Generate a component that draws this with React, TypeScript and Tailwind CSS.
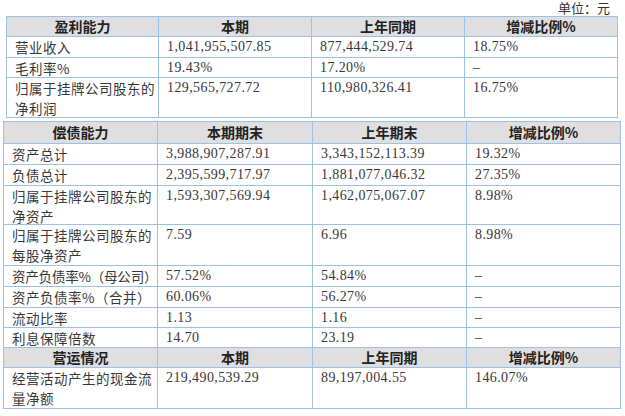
const serif = "font-['Liberation_Serif','Noto_Sans_CJK_SC',serif]";
const cjk = "font-['Noto_Sans_CJK_SC',sans-serif]";

type Row = { label: string[]; cur: string; prev: string; pct: string; h: string; tight?: boolean };

function HeaderRow({ cells, h }: { cells: string[]; h: string }) {
  return (
    <>
      {cells.map((c) => (
        <div
          key={c}
          className={`${h} ${cjk} flex items-center justify-center whitespace-nowrap border-r border-b border-[#9cc2e8] bg-[#dfdfdf] text-[14px] font-bold text-[#222]`}
        >
          {c}
        </div>
      ))}
    </>
  );
}

function DataRow({ row }: { row: Row }) {
  const multi = row.label.length > 1;
  const cell = `${row.h} whitespace-nowrap border-r border-b border-[#9cc2e8] pl-2 text-[#383838] ${multi ? '' : 'flex items-center'}`;
  return (
    <>
      <div
        className={`${cell} ${cjk} text-[13.5px] leading-[20px] ${row.tight ? 'tracking-[-0.2px]' : 'tracking-[0.5px]'}`}
      >
        <div>
          {row.label.map((l) => (
            <div key={l}>{l}</div>
          ))}
        </div>
      </div>
      <div className={`${cell} ${serif} text-[14px] leading-[20px] tracking-[0.4px]`}>{row.cur}</div>
      <div className={`${cell} ${serif} text-[14px] leading-[20px] tracking-[0.4px]`}>{row.prev}</div>
      <div className={`${cell} ${serif} text-[14px] leading-[20px] tracking-[0.4px]`}>{row.pct}</div>
    </>
  );
}

const profit: Row[] = [
  { label: ['营业收入'], cur: '1,041,955,507.85', prev: '877,444,529.74', pct: '18.75%', h: 'h-[21px]' },
  { label: ['毛利率%'], cur: '19.43%', prev: '17.20%', pct: '–', h: 'h-[20px]' },
  { label: ['归属于挂牌公司股东的', '净利润'], cur: '129,565,727.72', prev: '110,980,326.41', pct: '16.75%', h: 'h-[40px]' },
];

const debt: Row[] = [
  { label: ['资产总计'], cur: '3,988,907,287.91', prev: '3,343,152,113.39', pct: '19.32%', h: 'h-[21px]' },
  { label: ['负债总计'], cur: '2,395,599,717.97', prev: '1,881,077,046.32', pct: '27.35%', h: 'h-[21px]' },
  { label: ['归属于挂牌公司股东的', '净资产'], cur: '1,593,307,569.94', prev: '1,462,075,067.07', pct: '8.98%', h: 'h-[39px]' },
  { label: ['归属于挂牌公司股东的', '每股净资产'], cur: '7.59', prev: '6.96', pct: '8.98%', h: 'h-[41px]' },
  { label: ['资产负债率%（母公司）'], cur: '57.52%', prev: '54.84%', pct: '–', h: 'h-[21px]', tight: true },
  { label: ['资产负债率%（合并）'], cur: '60.06%', prev: '56.27%', pct: '–', h: 'h-[21px]' },
  { label: ['流动比率'], cur: '1.13', prev: '1.16', pct: '–', h: 'h-[20px]' },
  { label: ['利息保障倍数'], cur: '14.70', prev: '23.19', pct: '–', h: 'h-[20px]' },
];

const ops: Row[] = [
  { label: ['经营活动产生的现金流', '量净额'], cur: '219,490,539.29', prev: '89,197,004.55', pct: '146.07%', h: 'h-[41px]' },
];

export default function App() {
  return (
    <div className="h-[416px] w-[625px] bg-white">
      <div className={`${cjk} flex h-[16px] items-center justify-end whitespace-nowrap pr-[15px] text-[13px] leading-[16px] text-[#333]`}>
        单位：元
      </div>
      <div className="ml-[6px] grid w-[612px] grid-cols-[152px_153px_153px_153px] border-t border-l border-[#9cc2e8]">
        <HeaderRow cells={['盈利能力', '本期', '上年同期', '增减比例%']} h="h-[20px]" />
        {profit.map((r) => (
          <DataRow key={r.label.join('')} row={r} />
        ))}
      </div>
      <div className="mt-[3px] ml-[3px] grid w-[618px] grid-cols-[154px_155px_154px_154px] border-t border-l border-[#9cc2e8]">
        <HeaderRow cells={['偿债能力', '本期期末', '上年期末', '增减比例%']} h="h-[22px]" />
        {debt.map((r) => (
          <DataRow key={r.label.join('')} row={r} />
        ))}
        <HeaderRow cells={['营运情况', '本期', '上年同期', '增减比例%']} h="h-[20px]" />
        {ops.map((r) => (
          <DataRow key={r.label.join('')} row={r} />
        ))}
      </div>
    </div>
  );
}
